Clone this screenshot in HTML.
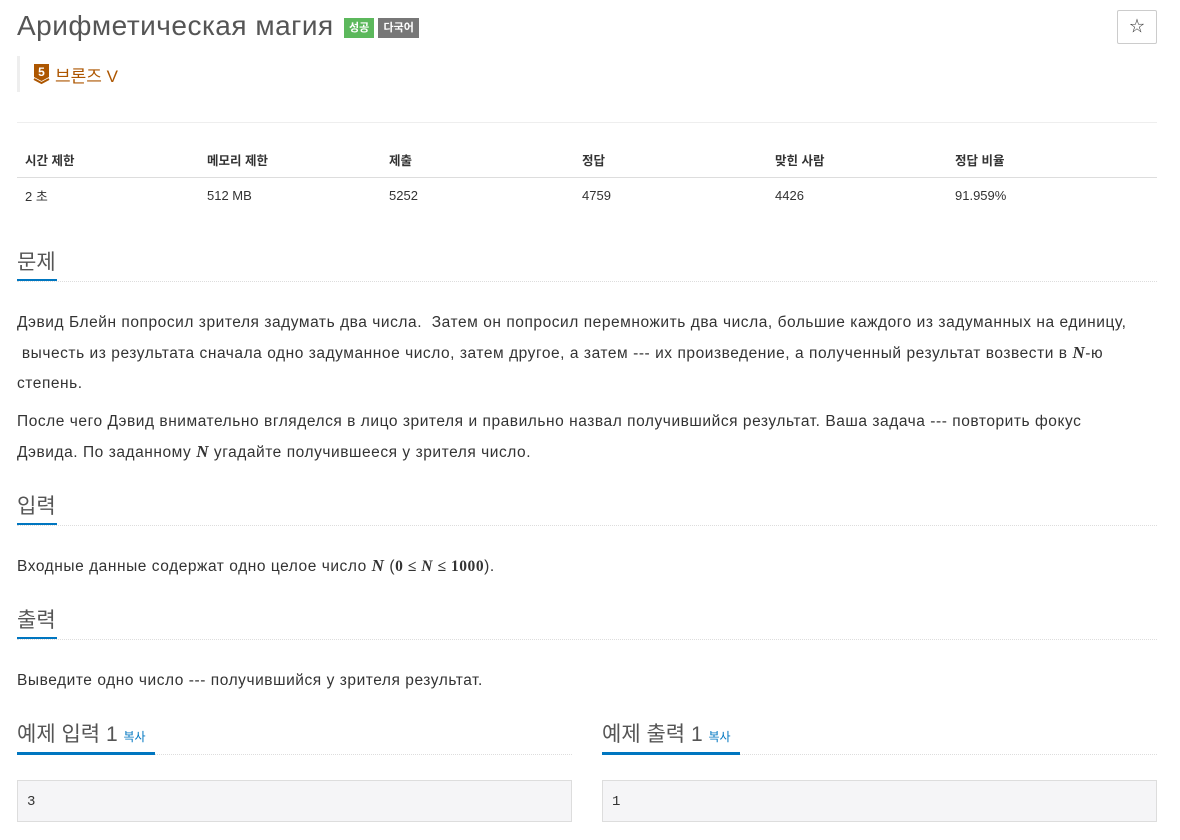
<!DOCTYPE html>
<html><head><meta charset="utf-8"><style>
body{margin:0;background:#fff;font-family:"Liberation Sans","Noto Sans CJK KR",sans-serif;color:#333;width:1180px;height:840px;overflow:hidden;position:relative}
.a{position:absolute}
h1{position:absolute;left:17px;top:10px;margin:0;font-weight:normal;font-size:28px;letter-spacing:0.5px;color:#555;white-space:nowrap}
.lab{display:inline-block;font-size:11px;color:#fff;padding:3px 5px;vertical-align:middle;font-weight:bold;line-height:14px;letter-spacing:0}
.hdr{position:absolute;left:17px;font-size:21px;color:#555}
.line{position:absolute;height:0;border-top:1px dotted #ddd}
.ul{position:absolute;height:3px;background:#0076c0}
p{position:absolute;left:17px;margin:0;font-size:15.5px;letter-spacing:0.55px;line-height:30px;color:#333;width:1160px;white-space:nowrap}
i.m{font-family:"Liberation Serif",serif;font-weight:bold;font-size:17px}
th,td{text-align:left;font-size:13px;padding:0 8px}
th{font-weight:bold;font-size:12.5px}
.box{position:absolute;top:780px;height:42px;background:#f5f5f7;border:1px solid #ddd;box-sizing:border-box;font-family:"Liberation Mono",monospace;font-size:14px;line-height:42px;padding-left:9px}
</style></head><body>
<h1>Арифметическая магия <span class="lab" style="background:#5cb85c;margin-left:2px">성공</span> <span class="lab" style="background:#777;margin-left:-4px">다국어</span></h1>
<div class="a" style="left:1117px;top:10px;width:38px;height:32px;border:1px solid #ccc;border-radius:2px;text-align:center;line-height:32px;font-size:15px">☆</div>
<div class="a" style="left:17px;top:56px;width:3px;height:36px;background:#eee"></div>
<svg class="a" style="left:33px;top:64px" width="17" height="21" viewBox="0 0 17 21"><path d="M1 0H16V13L8.5 17L1 13Z" fill="#ad5600"/><path d="M1 15L8.5 19L16 15" stroke="#ad5600" stroke-width="2" fill="none"/><text x="8.5" y="12" font-size="12" font-weight="bold" fill="#fff" text-anchor="middle" font-family="Liberation Sans">5</text></svg>
<div class="a" style="left:55px;top:62px;font-size:17px;color:#ad5600">브론즈 V</div>
<div class="line" style="left:17px;width:1140px;top:122px;border-top:1px solid #eee"></div>
<table class="a" style="left:17px;top:143px;width:1140px;border-collapse:collapse">
<tr style="height:34px;border-bottom:1px solid #ddd"><th style="width:166px">시간 제한</th><th style="width:166px">메모리 제한</th><th style="width:177px">제출</th><th style="width:177px">정답</th><th style="width:164px">맞힌 사람</th><th>정답 비율</th></tr>
<tr style="height:36px"><td>2 초</td><td>512 MB</td><td>5252</td><td>4759</td><td>4426</td><td>91.959%</td></tr></table>
<div class="hdr" style="top:246px">문제</div><div class="line" style="left:17px;width:1140px;top:281px"></div><div class="ul" style="left:17px;width:40px;top:279px;height:2px"></div>
<p style="top:308px">Дэвид Блейн попросил зрителя задумать два числа.&nbsp; Затем он попросил перемножить два числа, большие каждого из задуманных на единицу,<br>&nbsp;вычесть из результата сначала одно задуманное число, затем другое, а затем --- их произведение, а полученный результат возвести в <i class="m">N</i>-ю<br>степень.</p>
<p style="top:407px">После чего Дэвид внимательно вгляделся в лицо зрителя и правильно назвал получившийся результат. Ваша задача --- повторить фокус<br>Дэвида. По заданному <i class="m">N</i> угадайте получившееся у зрителя число.</p>
<div class="hdr" style="top:490px">입력</div><div class="line" style="left:17px;width:1140px;top:525px"></div><div class="ul" style="left:17px;width:40px;top:523px;height:2px"></div>
<p style="top:551px">Входные данные содержат одно целое число <i class="m">N</i> (<b style="font-family:'Liberation Serif',serif">0 ≤ <i>N</i> ≤ 1000</b>).</p>
<div class="hdr" style="top:604px">출력</div><div class="line" style="left:17px;width:1140px;top:639px"></div><div class="ul" style="left:17px;width:40px;top:637px;height:2px"></div>
<p style="top:666px">Выведите одно число --- получившийся у зрителя результат.</p>
<div class="hdr" style="top:718px">예제 입력 1 <span style="font-size:12px;color:#0076c0">복사</span></div><div class="line" style="left:17px;width:555px;top:754px"></div><div class="ul" style="left:17px;width:138px;top:752px"></div>
<div class="hdr" style="left:602px;top:718px">예제 출력 1 <span style="font-size:12px;color:#0076c0">복사</span></div><div class="line" style="left:602px;width:555px;top:754px"></div><div class="ul" style="left:602px;width:138px;top:752px"></div>
<div class="box" style="left:17px;width:555px">3</div>
<div class="box" style="left:602px;width:555px">1</div>
</body></html>
